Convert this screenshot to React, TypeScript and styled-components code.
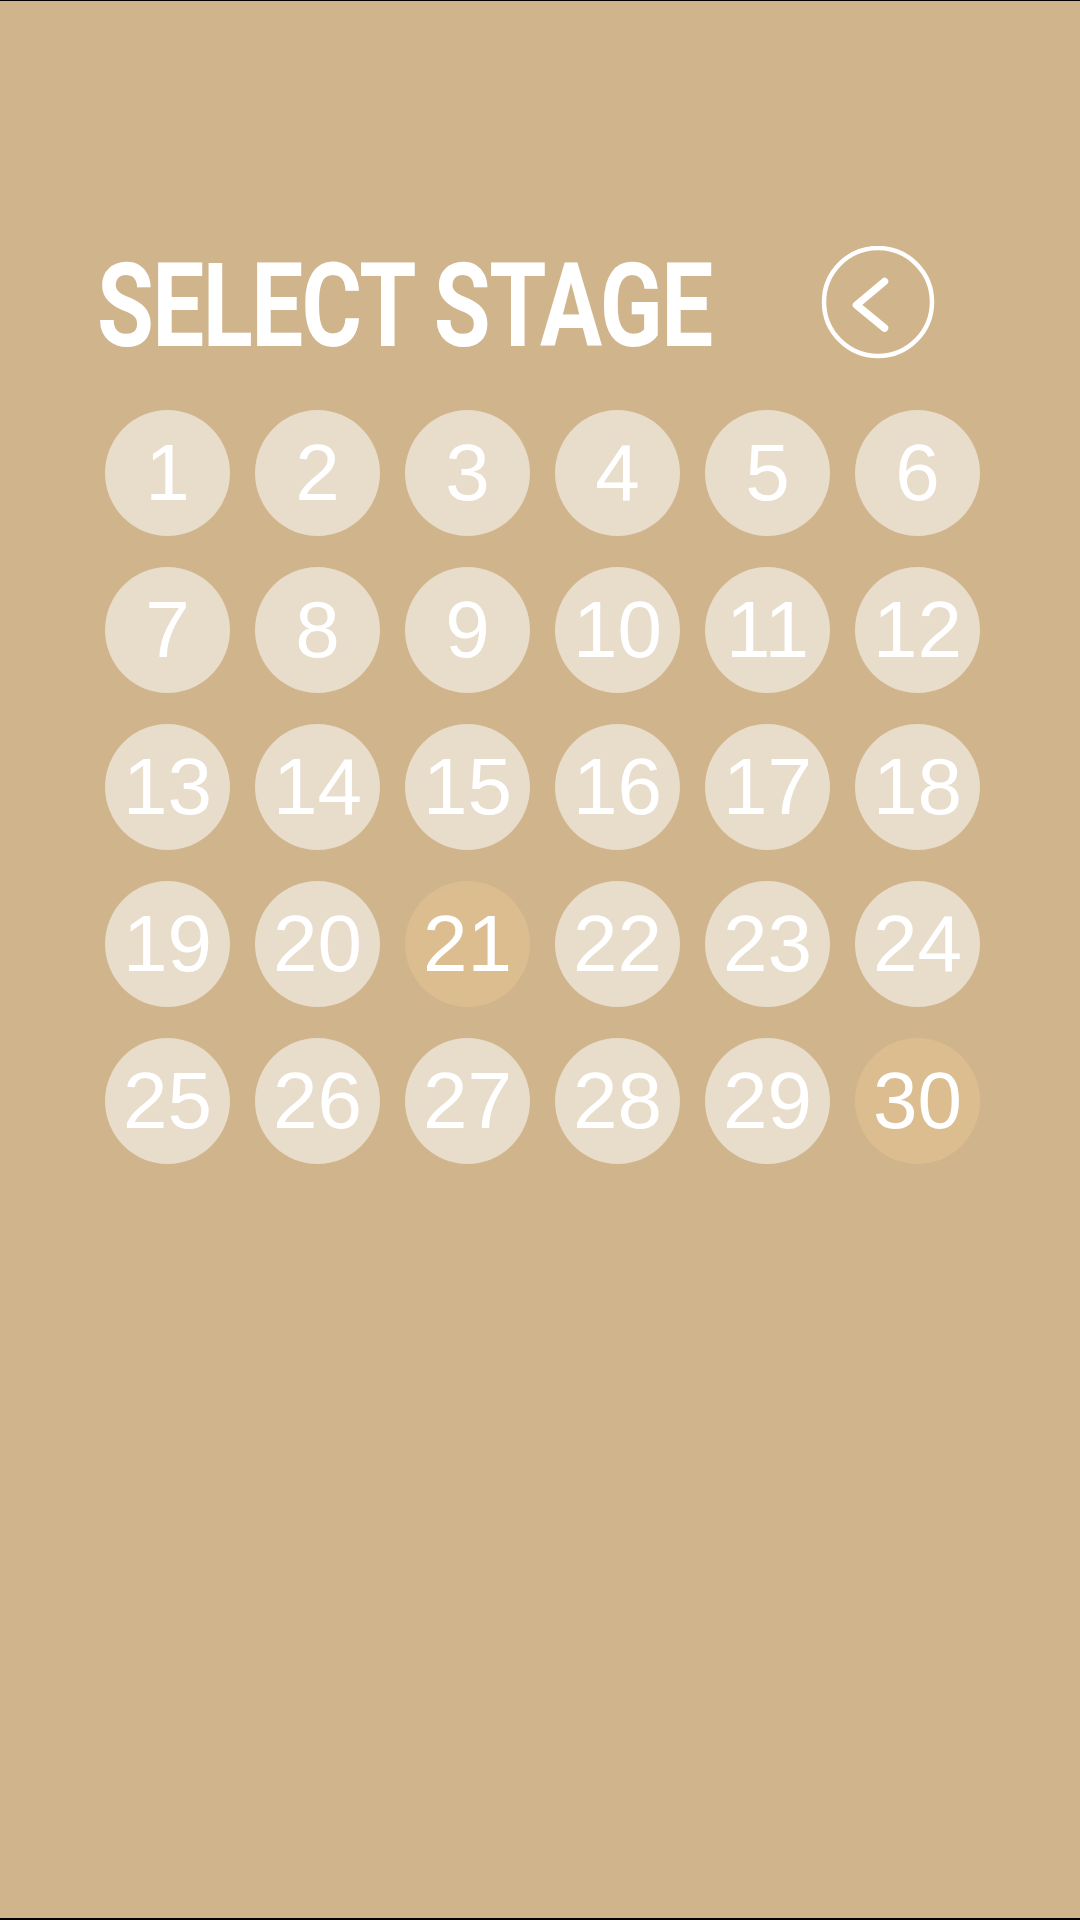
import React from 'react'
import styled, { createGlobalStyle } from 'styled-components'

const GlobalStyle = createGlobalStyle`
    html, body {
        margin: 0;
        padding: 0;
        background: #d0b48c;
    }
`

const stages = Array.from({ length: 30 }, (_, i) => i + 1)
const highlighted = [21, 30]

function BackIcon() {
    return (
        <svg width="114" height="114" viewBox="0 0 114 114" fill="none">
            <circle cx="57" cy="56" r="54" stroke="#fff" strokeWidth="4.5" />
            <polyline
                points="63.5,35.5 35.5,59 63.5,82"
                stroke="#fff"
                strokeWidth="7.5"
                strokeLinecap="round"
                strokeLinejoin="round"
            />
        </svg>
    )
}

export default function App() {
    return (
        <StPage>
            <GlobalStyle />
            <StHeader>
                <StTitle>SELECT STAGE</StTitle>
                <StBackButton aria-label="back">
                    <BackIcon />
                </StBackButton>
            </StHeader>
            <StStageGrid>
                {stages.map((n) => (
                    <StStage key={n} $active={highlighted.includes(n)}>
                        {n}
                    </StStage>
                ))}
            </StStageGrid>
        </StPage>
    )
}

const StPage = styled.div`
    width: 1080px;
    height: 1920px;
    box-sizing: border-box;
    border-top: 1px solid #000;
    border-bottom: 2px solid #000;
    background: #d0b48c;
    padding-top: 245px;
    overflow: hidden;
`

const StHeader = styled.div`
    display: flex;
    align-items: center;
    height: 114px;
    padding-left: 97px;
    padding-right: 145px;
`

const StTitle = styled.h1`
    flex: 1;
    min-width: 0;
    margin: 0;
    padding-top: 6px;
    font-family: Roboto, "Liberation Sans", sans-serif;
    font-weight: 700;
    font-size: 117px;
    line-height: 1;
    letter-spacing: -2px;
    color: #fff;
    white-space: nowrap;
    transform: scaleX(0.79);
    transform-origin: left center;
`

const StBackButton = styled.button`
    flex-shrink: 0;
    width: 114px;
    height: 114px;
    padding: 0;
    border: none;
    background: none;
    display: flex;
    cursor: pointer;
`

const StStageGrid = styled.div`
    display: grid;
    grid-template-columns: repeat(6, 125px);
    column-gap: 25px;
    row-gap: 31px;
    padding-left: 105px;
    margin-top: 50px;
`

const StStage = styled.div<{ $active: boolean }>`
    width: 125px;
    height: 126px;
    border-radius: 50%;
    background: ${({ $active }) => ($active ? '#dbbd90' : '#e8dcca')};
    display: flex;
    justify-content: center;
    align-items: center;
    font-family: "Liberation Sans", Arial, sans-serif;
    font-size: 80px;
    line-height: 1;
    color: #fff;
`
